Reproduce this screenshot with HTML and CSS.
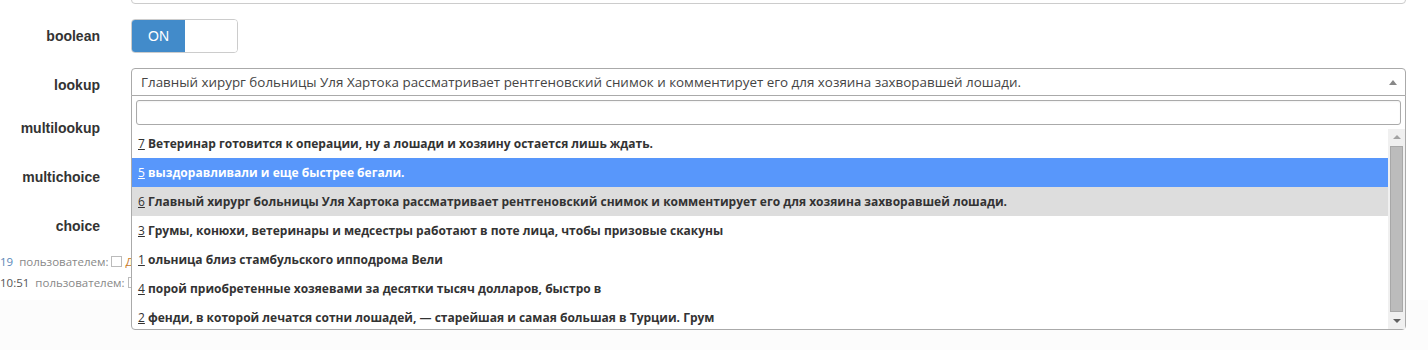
FILE: index.html
```html
<!DOCTYPE html>
<html lang="ru">

<head>
  <meta charset="UTF-8" />
  <meta name="viewport" content="width=device-width, initial-scale=1.0" />
  <title>Форма</title>
  <link rel="stylesheet" href="styles.css">
</head>

<body>
  <div class="page">
    <form class="form">
      <div class="row row-first">
        <label class="label">text</label>
        <div class="control"><input class="text-input" type="text" /></div>
      </div>

      <div class="row">
        <label class="label">boolean</label>
        <div class="control">
          <div class="switch">
            <span class="switch-on">ON</span>
            <span class="switch-off"></span>
          </div>
        </div>
      </div>

      <div class="row row-select">
        <label class="label">lookup</label>
        <div class="control">
          <div class="select">
            <div class="select-choice">
              <span class="select-value">Главный хирург больницы Уля Хартока рассматривает рентгеновский снимок и комментирует его для хозяина захворавшей лошади.</span>
              <span class="select-arrow"></span>
            </div>

            <div class="dropdown">
              <div class="dropdown-search"><input type="text" /></div>
              <div class="results">
                <ul class="results-list">
                  <li><u>7</u> Ветеринар готовится к операции, ну а лошади и хозяину остается лишь ждать.</li>
                  <li class="highlighted"><u>5</u> выздоравливали и еще быстрее бегали.</li>
                  <li class="selected"><u>6</u> Главный хирург больницы Уля Хартока рассматривает рентгеновский снимок и комментирует его для хозяина захворавшей лошади.</li>
                  <li><u>3</u> Грумы, конюхи, ветеринары и медсестры работают в поте лица, чтобы призовые скакуны</li>
                  <li><u>1</u> ольница близ стамбульского ипподрома Вели</li>
                  <li><u>4</u> порой приобретенные хозяевами за десятки тысяч долларов, быстро в</li>
                  <li><u>2</u> фенди, в которой лечатся сотни лошадей, — старейшая и самая большая в Турции. Грум</li>
                </ul>
                <div class="scrollbar">
                  <span class="scroll-up"></span>
                  <span class="scroll-thumb"></span>
                  <span class="scroll-down"></span>
                </div>
              </div>
            </div>
          </div>
        </div>
      </div>

      <div class="row">
        <label class="label">multilookup</label>
        <div class="control control-empty"></div>
      </div>

      <div class="row">
        <label class="label">multichoice</label>
        <div class="control control-empty"></div>
      </div>

      <div class="row">
        <label class="label">choice</label>
        <div class="control control-empty"></div>
      </div>
    </form>

    <div class="history">
      <div class="history-line"><span class="date link">19</span> <span class="muted">пользователем:</span> <span class="check"></span> <span class="user">Д</span></div>
      <div class="history-line"><span class="date">10:51</span> <span class="muted">пользователем:</span> <span class="check"></span></div>
    </div>
  </div>
  <div class="footer"></div>
</body>

</html>
```

FILE: styles.css
```css
body {
  margin: 0;
  font-family: "Liberation Sans", Arial, sans-serif;
  color: #333;
  background: #fff;
}

.page {
  display: flow-root;
  height: 300px;
  background: #fff;
}

.footer {
  height: 50px;
  background: #fcfcfc;
}

.form {
  margin: -30px 22px 0 0;
}

.row {
  display: flex;
  align-items: center;
  gap: 31px;
  margin-bottom: 15px;
}

.label {
  width: 100px;
  flex: none;
  text-align: right;
  font-size: 14px;
  font-weight: bold;
  color: #333;
}

.row-first .label {
  visibility: hidden;
}

.row-select .label {
  padding-top: 6px;
}

.control {
  flex: 1;
  position: relative;
}

.control-empty {
  height: 34px;
}

.text-input {
  display: block;
  box-sizing: border-box;
  width: 100%;
  height: 34px;
  border: 1px solid #ccc;
  border-radius: 4px;
}

/* switch */
.switch {
  display: flex;
  width: 107px;
  height: 34px;
  box-sizing: border-box;
  border: 1px solid #ccc;
  border-radius: 4px;
  overflow: hidden;
}

.switch-on {
  width: 53px;
  background: #428bca;
  color: #fff;
  font-size: 14px;
  line-height: 32px;
  text-align: center;
}

.switch-off {
  flex: 1;
  background: #fff;
}

/* select */
.select {
  position: relative;
}

.select-choice {
  display: flex;
  align-items: center;
  height: 28px;
  box-sizing: border-box;
  border: 1px solid #aaa;
  border-radius: 4px 4px 0 0;
  padding: 0 8px 0 9px;
  background: #fff;
  font-family: "Open Sans", sans-serif;
  font-size: 13.4px;
  color: #444;
}

.select-value {
  flex: 1;
  white-space: nowrap;
  overflow: hidden;
}

.select-arrow {
  width: 0;
  height: 0;
  border-left: 4px solid transparent;
  border-right: 4px solid transparent;
  border-bottom: 5px solid #888;
}

.dropdown {
  position: absolute;
  left: 0;
  right: 0;
  top: 27px;
  background: #fff;
  border: 1px solid #aaa;
  border-radius: 0 0 4px 4px;
  z-index: 2;
}

.dropdown-search {
  padding: 4px;
}

.dropdown-search input {
  display: block;
  box-sizing: border-box;
  width: 100%;
  height: 25px;
  border: 1px solid #aaa;
  border-radius: 3px;
  box-shadow: inset 0 1px 2px rgba(0, 0, 0, 0.05);
}

.results {
  display: flex;
  height: 200px;
  overflow: hidden;
}

.results-list {
  flex: 1;
  list-style: none;
  margin: 0;
  padding: 0;
  font-family: "Open Sans", sans-serif;
  font-size: 12px;
  font-weight: bold;
  color: #333;
}

.results-list li {
  height: 29px;
  box-sizing: border-box;
  padding: 6px 6px;
  line-height: 17px;
  white-space: nowrap;
}

.results-list u {
  font-weight: normal;
}

.results-list .highlighted {
  background: #5897fb;
  color: #fff;
}

.results-list .selected {
  background: #ddd;
}

.scrollbar {
  width: 17px;
  flex: none;
  display: flex;
  flex-direction: column;
  align-items: center;
  background: #f0f0f0;
}

.scroll-up,
.scroll-down {
  width: 0;
  height: 0;
  border-left: 4px solid transparent;
  border-right: 4px solid transparent;
}

.scroll-up {
  border-bottom: 4px solid #a3a3a3;
  margin: 6px 0 7px;
}

.scroll-down {
  border-top: 4px solid #606060;
  margin: 7px 0 6px;
}

.scroll-thumb {
  width: 13px;
  flex: 1;
  box-sizing: border-box;
  background: #bcbcbc;
  border: 1px solid #a8a8a8;
}

/* history lines */
.history {
  margin-top: -7px;
  font-family: "Open Sans", sans-serif;
  font-size: 11.5px;
  line-height: 21px;
}

.history-line {
  white-space: nowrap;
}

.date {
  color: #555;
}

.date.link {
  color: #5b87b8;
}

.muted {
  color: #888;
  margin-left: 3px;
}

.check {
  display: inline-block;
  width: 9px;
  height: 9px;
  border: 1px solid #bbb;
  vertical-align: -1px;
}

.user {
  color: #c87a2a;
}
```
